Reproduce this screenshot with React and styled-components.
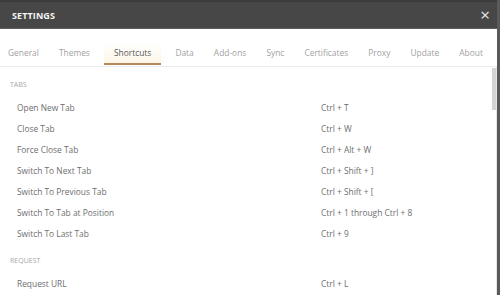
import React from 'react'
import styled, { createGlobalStyle } from 'styled-components'

const GlobalStyle = createGlobalStyle`
    html, body {
        margin: 0;
        padding: 0;
        background: #ffffff;
    }
    * {
        box-sizing: border-box;
    }
`

const tabs = ['General', 'Themes', 'Shortcuts', 'Data', 'Add-ons', 'Sync', 'Certificates', 'Proxy', 'Update', 'About']

const sections = [
    {
        title: 'Tabs',
        rows: [
            ['Open New Tab', 'Ctrl + T'],
            ['Close Tab', 'Ctrl + W'],
            ['Force Close Tab', 'Ctrl + Alt + W'],
            ['Switch To Next Tab', 'Ctrl + Shift + ]'],
            ['Switch To Previous Tab', 'Ctrl + Shift + ['],
            ['Switch To Tab at Position', 'Ctrl + 1 through Ctrl + 8'],
            ['Switch To Last Tab', 'Ctrl + 9'],
        ],
    },
    {
        title: 'Request',
        rows: [
            ['Request URL', 'Ctrl + L'],
        ],
    },
]

export default function App() {
    return (
        <>
            <GlobalStyle />
            <Modal>
                <Header>
                    <Title>SETTINGS</Title>
                    <Close>×</Close>
                </Header>
                <TabBar>
                    {tabs.map(t => (
                        <Tab key={t} $active={t === 'Shortcuts'}>{t}</Tab>
                    ))}
                </TabBar>
                <Body>
                    <Content>
                        {sections.map((s, i) => (
                            <Section key={s.title} $first={i === 0}>
                                <SectionTitle>{s.title}</SectionTitle>
                                {s.rows.map(([label, keys]) => (
                                    <Row key={label}>
                                        <Label>{label}</Label>
                                        <Keys>{keys}</Keys>
                                    </Row>
                                ))}
                            </Section>
                        ))}
                    </Content>
                    <ScrollTrack>
                        <ScrollThumb />
                    </ScrollTrack>
                </Body>
            </Modal>
        </>
    )
}

const Modal = styled.div`
    width: 500px;
    height: 295px;
    display: flex;
    flex-direction: column;
    overflow: hidden;
    background: #ffffff;
    font-family: "Open Sans", "Noto Sans", sans-serif;
    border-right: 3px solid #5a5a5a;
`
const Header = styled.div`
    flex: none;
    height: 29px;
    display: flex;
    align-items: center;
    justify-content: space-between;
    padding: 0 10px 0 12px;
    background: #474747;
    border-top: 2px solid #3c3c3c;
    border-bottom: 1px solid #5e5e5e;
    margin-right: -3px;
`
const Title = styled.div`
    color: #f4f4f4;
    font-size: 9px;
    font-weight: 700;
    letter-spacing: 0.1px;
`
const Close = styled.div`
    color: #e8e8e8;
    font-size: 17px;
    line-height: 1;
    margin-top: -1px;
`
const TabBar = styled.div`
    flex: none;
    height: 38px;
    display: flex;
    align-items: stretch;
    padding: 0 8px 0 2px;
    justify-content: space-between;
    border-bottom: 1px solid #ebebeb;
`
const Tab = styled.div`
    display: flex;
    align-items: center;
    padding: 12px ${p => (p.$active ? '10px' : '6px')} 0;
    font-size: 8.4px;
    color: ${p => (p.$active ? '#5a5a5a' : '#a2a2a2')};
    background: ${p => (p.$active ? 'linear-gradient(#ffffff 40%, #fdf6e6)' : 'transparent')};
    border-bottom: 2px solid ${p => (p.$active ? '#b8875a' : 'transparent')};
    margin-bottom: 1px;
`
const Body = styled.div`
    flex: 1;
    min-height: 0;
    display: flex;
`
const Content = styled.div`
    flex: 1;
    overflow: hidden;
    padding: 11px 0 0 10px;
`
const ScrollTrack = styled.div`
    flex: none;
    width: 8px;
    border-right: 1px solid #e6e6e6;
`
const ScrollThumb = styled.div`
    width: 4px;
    height: 42px;
    margin: 1px 0 0 3px;
    background: #d4d4d4;
`
const Section = styled.div`
    margin-top: ${p => (p.$first ? '0' : '10px')};
`
const SectionTitle = styled.div`
    height: 14px;
    line-height: 14px;
    font-size: 7px;
    text-transform: uppercase;
    color: #a6a6a6;
    margin-bottom: 5px;
`
const Row = styled.div`
    height: 21px;
    display: flex;
    align-items: center;
    padding-left: 7px;
    font-size: 8.4px;
    color: #6e6e6e;
`
const Label = styled.div`
    width: 304px;
`
const Keys = styled.div`
    flex: 1;
`
